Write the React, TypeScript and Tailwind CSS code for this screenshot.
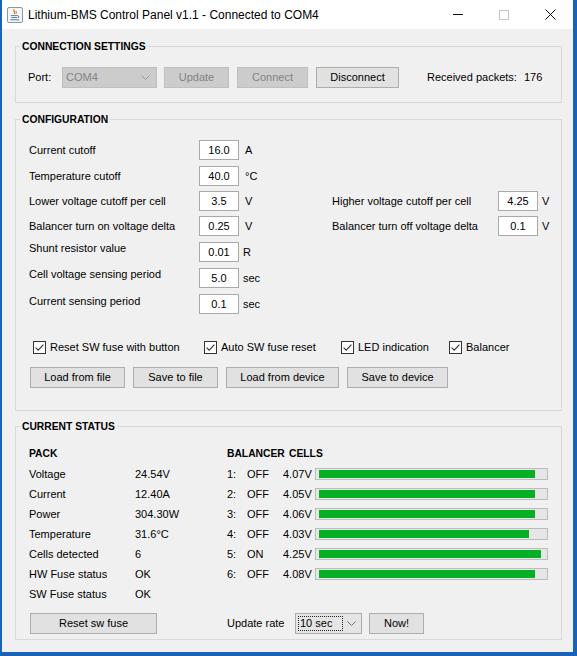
import React from "react";

function Check() {
  return (
    <svg width="13" height="13" viewBox="0 0 13 13" className="shrink-0">
      <rect x="0.5" y="0.5" width="12" height="12" fill="#ffffff" stroke="#333333" />
      <path d="M2.6 6.6 L5.2 9.2 L10.4 3.6" fill="none" stroke="#333333" strokeWidth="1.1" />
    </svg>
  );
}

function Chevron({ color }: { color: string }) {
  return (
    <svg width="9" height="5" viewBox="0 0 9 5" className="shrink-0">
      <path d="M0.5 0.5 L4.5 4.5 L8.5 0.5" fill="none" stroke={color} strokeWidth="1" />
    </svg>
  );
}

function Btn({ label, cls, disabled }: { label: string; cls: string; disabled?: boolean }) {
  return (
    <div
      className={
        "h-[21px] flex items-center justify-center border shrink-0 " +
        (disabled
          ? "bg-[#cccccc] border-[#bfbfbf] text-[#838383] "
          : "bg-[#e1e1e1] border-[#adadad] text-black ") +
        cls
      }
    >
      {label}
    </div>
  );
}

function Field({ value }: { value: string }) {
  return (
    <div className="w-[40px] h-[20px] shrink-0 bg-white border border-[#a9a9a9] flex items-center justify-center">
      {value}
    </div>
  );
}

function Group({ title, cls, children }: { title: string; cls: string; children: React.ReactNode }) {
  return (
    <div className={"relative border border-[#d9d9d9] " + cls}>
      <span className="absolute left-[4px] top-[-7px] bg-[#f0f0f0] px-[2px] text-[10.3px] font-bold leading-[14px]">
        {title}
      </span>
      {children}
    </div>
  );
}

function JavaIcon() {
  return (
    <svg width="16" height="16" viewBox="0 0 16 16">
      <rect x="0.5" y="0.5" width="15" height="15" rx="1.5" fill="#f3f5f7" stroke="#8c98a6" />
      <path d="M7.2 2.5 C5.8 4 8.6 4.8 7.3 7" fill="none" stroke="#e76f00" strokeWidth="1.2" />
      <path d="M9.3 4 C8.7 5 9.8 5.6 9 6.8" fill="none" stroke="#e76f00" strokeWidth="1" />
      <path d="M3.8 8.6 H10.8" stroke="#5382a1" strokeWidth="1" />
      <path d="M10.8 8.8 Q13.2 9.3 11 11" fill="none" stroke="#5382a1" strokeWidth="1" />
      <path d="M4.3 10.6 H10.2" stroke="#5382a1" strokeWidth="1" />
      <path d="M3.3 12.8 H12.2" stroke="#5382a1" strokeWidth="1" />
    </svg>
  );
}

const cells = [
  { n: "1:", s: "OFF", v: "4.07V", w: 216 },
  { n: "2:", s: "OFF", v: "4.05V", w: 216 },
  { n: "3:", s: "OFF", v: "4.06V", w: 216 },
  { n: "4:", s: "OFF", v: "4.03V", w: 210 },
  { n: "5:", s: "ON", v: "4.25V", w: 222 },
  { n: "6:", s: "OFF", v: "4.08V", w: 216 },
];

const pack = [
  ["Voltage", "24.54V"],
  ["Current", "12.40A"],
  ["Power", "304.30W"],
  ["Temperature", "31.6°C"],
  ["Cells detected", "6"],
  ["HW Fuse status", "OK"],
  ["SW Fuse status", "OK"],
];

export default function App() {
  return (
    <div className="w-[577px] h-[656px] bg-[#1a62b5] pl-[2px] pr-[4px] pb-[4px] flex flex-col font-['Liberation_Sans',Arial,sans-serif] text-[11px] text-black leading-none">
      {/* Title bar */}
      <div className="h-[29px] bg-white flex items-center shrink-0">
        <div className="ml-[5px] w-[16px] h-[16px]">
          <JavaIcon />
        </div>
        <span className="ml-[5px] text-[12px]">Lithium-BMS Control Panel v1.1 - Connected to COM4</span>
        <div className="ml-auto flex h-full">
          <div className="w-[46px] h-full flex items-center justify-center">
            <div className="w-[10px] h-[1px] bg-[#111111]" />
          </div>
          <div className="w-[46px] h-full flex items-center justify-center">
            <div className="w-[10px] h-[10px] border border-[#c4c4c4]" />
          </div>
          <div className="w-[46px] h-full flex items-center justify-center">
            <svg width="11" height="11" viewBox="0 0 11 11">
              <path d="M0.5 0.5 L10.5 10.5 M10.5 0.5 L0.5 10.5" stroke="#111111" strokeWidth="1" />
            </svg>
          </div>
        </div>
      </div>

      {/* Body */}
      <div className="flex-1 bg-[#f0f0f0] pl-[13px] pr-[11px] pt-[17px] flex flex-col">
        {/* Connection settings */}
        <Group title="CONNECTION SETTINGS" cls="pt-[20px] pb-[14px] pl-[12px]">
          <div className="flex items-center h-[21px]">
            <span className="w-[34px] shrink-0">Port:</span>
            <div className="w-[95px] h-[21px] shrink-0 bg-[#cccccc] border border-[#bfbfbf] text-[#838383] flex items-center pl-[3px] pr-[6px]">
              <span className="flex-1">COM4</span>
              <Chevron color="#9a9a9a" />
            </div>
            <Btn label="Update" cls="ml-[7px] w-[65px]" disabled />
            <Btn label="Connect" cls="ml-[8px] w-[71px]" disabled />
            <Btn label="Disconnect" cls="ml-[8px] w-[83px]" />
            <span className="ml-[28px] w-[97px] shrink-0">Received packets:</span>
            <span>176</span>
          </div>
        </Group>

        {/* Configuration */}
        <Group title="CONFIGURATION" cls="mt-[16px] pt-[20px] pb-[22px] pl-[13px]">
          <div className="flex items-center h-[20px]">
            <span className="w-[170px] shrink-0">Current cutoff</span>
            <Field value="16.0" />
            <span className="ml-[6px]">A</span>
          </div>
          <div className="flex items-center h-[20px] mt-[6px]">
            <span className="w-[170px] shrink-0">Temperature cutoff</span>
            <Field value="40.0" />
            <span className="ml-[6px]">°C</span>
          </div>
          <div className="flex items-center h-[20px] mt-[5px]">
            <div className="flex items-center w-[303px] shrink-0">
              <span className="w-[170px] shrink-0">Lower voltage cutoff per cell</span>
              <Field value="3.5" />
              <span className="ml-[6px]">V</span>
            </div>
            <span className="w-[166px] shrink-0">Higher voltage cutoff per cell</span>
            <Field value="4.25" />
            <span className="ml-[4px]">V</span>
          </div>
          <div className="flex items-center h-[20px] mt-[5px]">
            <div className="flex items-center w-[303px] shrink-0">
              <span className="w-[170px] shrink-0">Balancer turn on voltage delta</span>
              <Field value="0.25" />
              <span className="ml-[6px]">V</span>
            </div>
            <span className="w-[166px] shrink-0">Balancer turn off voltage delta</span>
            <Field value="0.1" />
            <span className="ml-[4px]">V</span>
          </div>
          <div className="flex items-center h-[20px] mt-[6px]">
            <span className="w-[170px] shrink-0 mb-[7px]">Shunt resistor value</span>
            <Field value="0.01" />
            <span className="ml-[4px]">R</span>
          </div>
          <div className="flex items-center h-[20px] mt-[6px]">
            <span className="w-[170px] shrink-0 mb-[7px]">Cell voltage sensing period</span>
            <Field value="5.0" />
            <span className="ml-[4px]">sec</span>
          </div>
          <div className="flex items-center h-[20px] mt-[6px]">
            <span className="w-[170px] shrink-0 mb-[6px]">Current sensing period</span>
            <Field value="0.1" />
            <span className="ml-[4px]">sec</span>
          </div>

          <div className="flex items-center h-[18px] mt-[24px] pl-[4px]">
            <div className="w-[171px] shrink-0 flex items-center gap-[4px]">
              <Check />
              <span>Reset SW fuse with button</span>
            </div>
            <div className="w-[137px] shrink-0 flex items-center gap-[4px]">
              <Check />
              <span>Auto SW fuse reset</span>
            </div>
            <div className="w-[108px] shrink-0 flex items-center gap-[4px]">
              <Check />
              <span>LED indication</span>
            </div>
            <div className="flex items-center gap-[4px]">
              <Check />
              <span>Balancer</span>
            </div>
          </div>

          <div className="flex items-center h-[21px] mt-[11px] ml-[1px] gap-[8px]">
            <Btn label="Load from file" cls="w-[95px]" />
            <Btn label="Save to file" cls="w-[85px]" />
            <Btn label="Load from device" cls="w-[113px]" />
            <Btn label="Save to device" cls="w-[101px]" />
          </div>
        </Group>

        {/* Current status */}
        <Group title="CURRENT STATUS" cls="mt-[15px] pt-[17px] pb-[5px] pl-[13px]">
          <div className="flex">
            <div className="w-[198px] shrink-0 flex flex-col">
              <div className="h-[20px] flex items-center text-[10.3px] font-bold">PACK</div>
              {pack.map(([k, v]) => (
                <div key={k} className="h-[20px] flex items-center">
                  <span className="w-[106px] shrink-0">{k}</span>
                  <span>{v}</span>
                </div>
              ))}
            </div>
            <div className="flex flex-col">
              <div className="h-[20px] flex items-center text-[10.3px] font-bold">
                <span className="w-[62px] shrink-0">BALANCER</span>
                <span>CELLS</span>
              </div>
              {cells.map((c) => (
                <div key={c.n} className="h-[20px] flex items-center">
                  <span className="w-[20px] shrink-0">{c.n}</span>
                  <span className="w-[36px] shrink-0">{c.s}</span>
                  <span className="w-[32px] shrink-0">{c.v}</span>
                  <div className="w-[233px] h-[12px] bg-[#e6e6e6] border border-[#bcbcbc] flex items-center pl-[3px]">
                    <div className="h-[8px] bg-[#06b025]" style={{ width: c.w }} />
                  </div>
                </div>
              ))}
            </div>
          </div>
          <div className="flex items-center h-[21px] mt-[9px]">
            <div className="w-[198px] shrink-0 pl-[1px]">
              <Btn label="Reset sw fuse" cls="w-[127px]" />
            </div>
            <span className="w-[68px] shrink-0">Update rate</span>
            <div className="w-[67px] h-[21px] shrink-0 bg-[#e5e5e5] border border-[#adadad] flex items-center pl-[2px] pr-[5px]">
              <span className="w-[45px] h-[15px] border border-dotted border-[#222222] flex items-center pl-[1px]">
                10 sec
              </span>
              <span className="ml-auto">
                <Chevron color="#707070" />
              </span>
            </div>
            <Btn label="Now!" cls="ml-[7px] w-[55px]" />
          </div>
        </Group>
      </div>
    </div>
  );
}
